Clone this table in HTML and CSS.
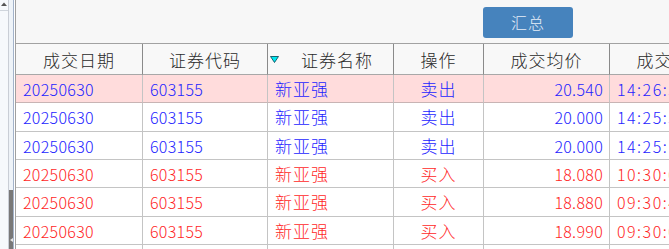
FILE: index.html
```html
<!DOCTYPE html>
<html lang="zh">
<head>
<meta charset="utf-8">
<link rel="stylesheet" href="styles.css">
</head>
<body>
<div class="app">
  <div class="scroll">
    <div class="sb-track">
      <div class="sb-up"><svg width="8" height="10" viewBox="0 0 8 10"><polygon points="1,6 4,2.5 7,6" fill="#555"/></svg></div>
    </div>
    <div class="sb-col"><div class="sb-spacer"></div><div class="sb-thumb"><span class="sb-notch"></span></div></div>
    <div class="sb-edge"></div>
  </div>
  <div class="main">
    <div class="toolbar"><button class="btn">汇总</button></div>
    <div class="grid">
      <div class="row head">
        <div class="c">成交日期</div>
        <div class="c">证券代码</div>
        <div class="c sorted"><svg class="sort" width="9" height="7" viewBox="0 0 9 7"><polygon points="0.5,0.5 8.5,0.5 4.5,6.5" fill="#00e8f0" stroke="#004050" stroke-width="0.8"/></svg><span class="ht">证券名称</span></div>
        <div class="c">操作</div>
        <div class="c">成交均价</div>
        <div class="c">成交时间</div>
      </div>
      <div class="row sel blue">
        <div class="c l num">20250630</div><div class="c l num">603155</div><div class="c l cjk">新亚强</div><div class="c cjk">卖出</div><div class="c r num">20.540</div><div class="c l num time">14:26:35</div>
      </div>
      <div class="row blue">
        <div class="c l num">20250630</div><div class="c l num">603155</div><div class="c l cjk">新亚强</div><div class="c cjk">卖出</div><div class="c r num">20.000</div><div class="c l num time">14:25:51</div>
      </div>
      <div class="row blue">
        <div class="c l num">20250630</div><div class="c l num">603155</div><div class="c l cjk">新亚强</div><div class="c cjk">卖出</div><div class="c r num">20.000</div><div class="c l num time">14:25:12</div>
      </div>
      <div class="row red">
        <div class="c l num">20250630</div><div class="c l num">603155</div><div class="c l cjk">新亚强</div><div class="c cjk">买入</div><div class="c r num">18.080</div><div class="c l num time">10:30:04</div>
      </div>
      <div class="row red">
        <div class="c l num">20250630</div><div class="c l num">603155</div><div class="c l cjk">新亚强</div><div class="c cjk">买入</div><div class="c r num">18.880</div><div class="c l num time">09:30:41</div>
      </div>
      <div class="row red">
        <div class="c l num">20250630</div><div class="c l num">603155</div><div class="c l cjk">新亚强</div><div class="c cjk">买入</div><div class="c r num">18.990</div><div class="c l num time">09:30:02</div>
      </div>
      <div class="row red">
        <div class="c l num">20250627</div><div class="c l num">603155</div><div class="c l cjk">新亚强</div><div class="c cjk">买入</div><div class="c r num">19.100</div><div class="c l num time">14:55:10</div>
      </div>
    </div>
  </div>
</div>
</body>
</html>
```

FILE: styles.css
```css
html, body {
  margin: 0;
  padding: 0;
  background: #ffffff;
}
body {
  width: 669px;
  height: 249px;
  overflow: hidden;
}
.app {
  display: flex;
  height: 249px;
}
.scroll {
  display: flex;
  flex: none;
  height: 249px;
}
.sb-track {
  width: 8px;
  background: #f6f9fc;
  border-right: 1px solid #c9ced6;
}
.sb-up {
  height: 10px;
  border-bottom: 1px solid #cfd5dc;
  display: flex;
}
.sb-up svg { display: block; }
.sb-col {
  width: 4px;
  background: #eef3f8;
  display: flex;
  flex-direction: column;
}
.sb-spacer { flex: 1; }
.sb-thumb {
  height: 59px;
  background: #787878;
  display: flex;
  align-items: flex-end;
  padding-bottom: 7px;
  box-sizing: border-box;
}
.sb-notch {
  width: 0;
  height: 0;
  border-top: 2px solid transparent;
  border-bottom: 2px solid transparent;
  border-right: 3px solid #e8e8e8;
  margin-left: 1px;
}
.sb-edge {
  width: 1px;
  background: #a3b3ca;
  border-right: 1px solid #ffffff;
}
.main {
  flex: 1;
  min-width: 0;
  overflow: hidden;
  border-left: 1px solid #a0a0a0;
  background: #ffffff;
}
.toolbar {
  height: 43px;
  box-sizing: border-box;
  background: #f7f7f7;
  padding: 7px 0 0 467px;
  display: flex;
  align-items: flex-start;
}
.btn {
  width: 90px;
  height: 31px;
  border: none;
  border-radius: 3px;
  background: #4683bd;
  color: #e6eef8;
  font-family: "Noto Sans CJK SC", sans-serif;
  font-size: 16px;
  font-weight: 300;
  letter-spacing: 1px;
  padding: 0;
  line-height: 31px;
}
.grid {
  display: flex;
  flex-direction: column;
  width: 720px;
}
.row {
  display: grid;
  grid-template-columns: 127px 125px 126px 90px 126px 126px;
  height: 28.33px;
  box-sizing: border-box;
}
.row .c {
  box-sizing: border-box;
  border-right: 1px solid #c4c4c4;
  border-bottom: 1px solid #c4c4c4;
  display: flex;
  align-items: center;
  justify-content: center;
  white-space: nowrap;
  overflow: hidden;
  padding-top: 1px;
}
.head {
  height: 32px;
  background: #f8f8f8;
  border-top: 1px solid #a2a2a2;
}
.head .c {
  border-right-color: #8a8a8a;
  border-bottom-color: #a8a8a8;
  font-family: "Noto Sans CJK SC", sans-serif;
  font-size: 17px;
  font-weight: 300;
  letter-spacing: 1px;
  color: #2a2a2a;
  line-height: 20px;
}
.head .sorted {
  justify-content: flex-start;
}
.sort {
  display: block;
  margin-left: 2px;
  flex: none;
}
.ht {
  flex: 1;
  text-align: center;
  padding-left: 2px;
}
.sel { background: #ffdcdc; }
.sel .c { border-bottom-color: #c8b4b4; }
.blue { color: #2424ff; }
.red { color: #ff1f1f; }
.num {
  font-family: "Noto Sans CJK SC", sans-serif;
  font-weight: 300;
  font-size: 16px;
  font-variant-numeric: tabular-nums;
  letter-spacing: 0.3px;
  line-height: 20px;
}
.num.time {
  letter-spacing: 1.5px;
}
.cjk {
  font-family: "Noto Sans CJK SC", sans-serif;
  font-size: 17px;
  font-weight: 300;
  letter-spacing: 1px;
  line-height: 20px;
}
.row .l { justify-content: flex-start; padding-left: 7px; }
.row .r { justify-content: flex-end; padding-right: 6px; }
```
